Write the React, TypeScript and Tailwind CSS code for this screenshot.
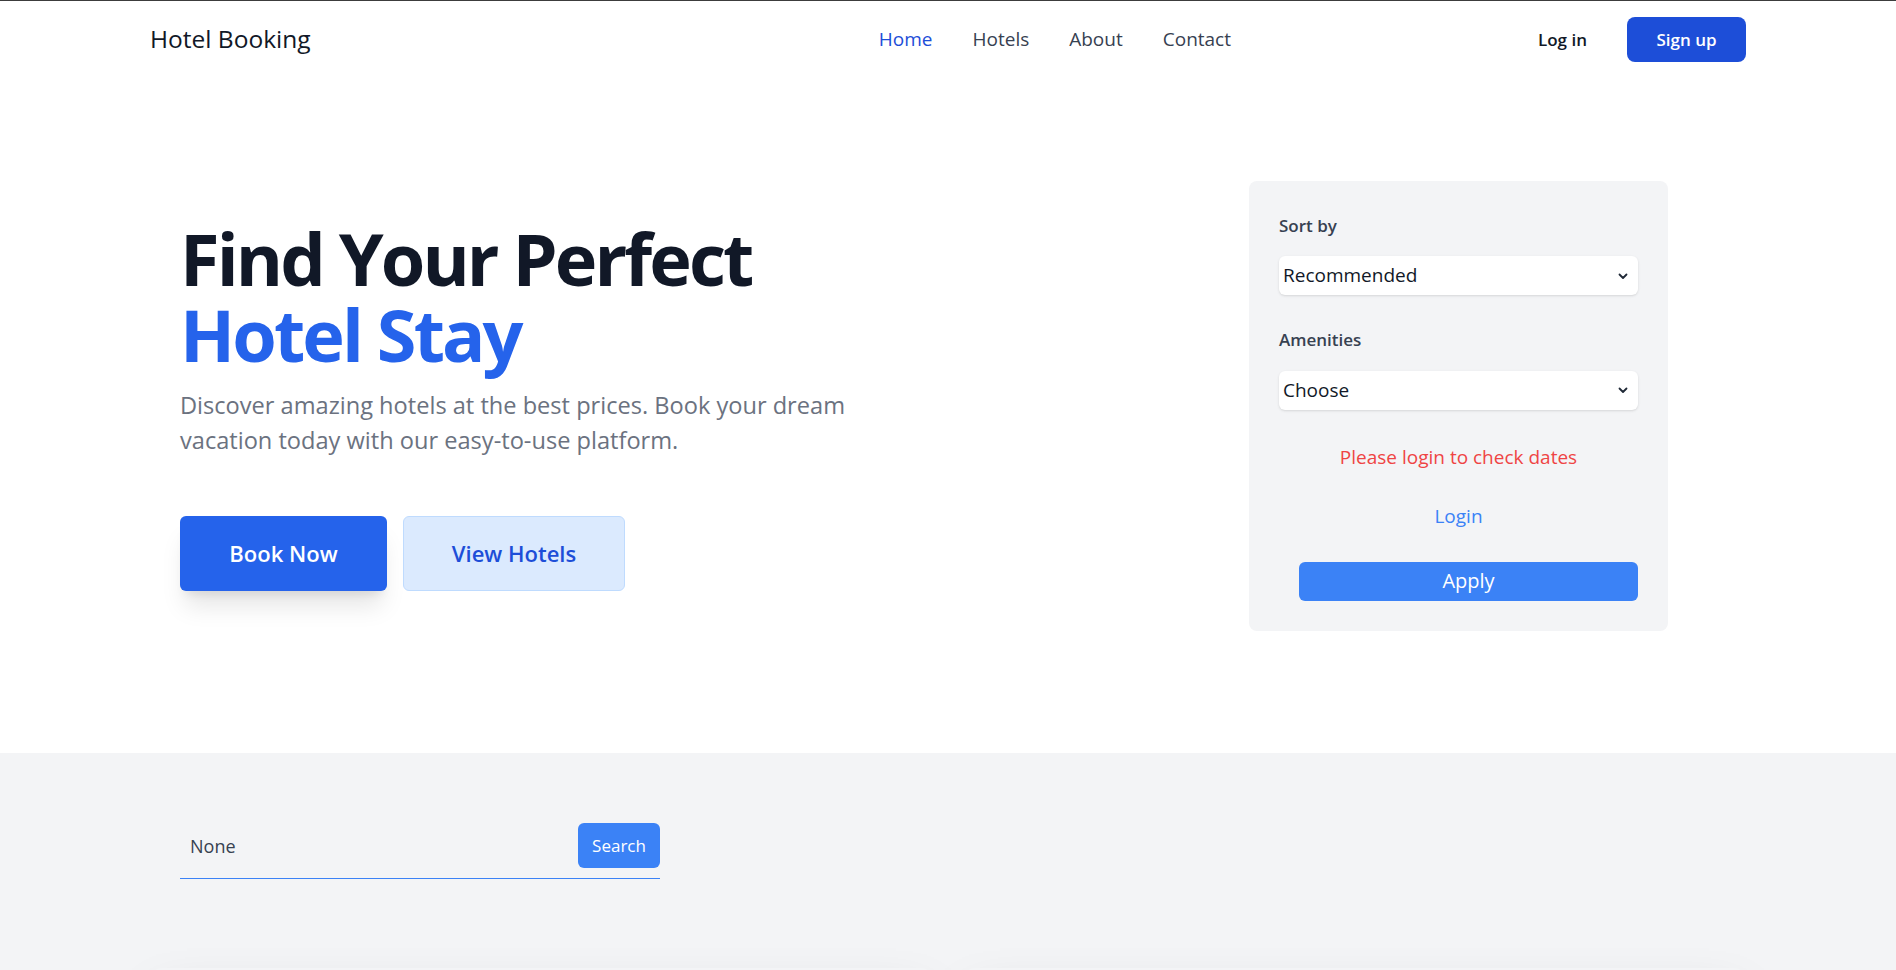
import { useState } from 'react';

function Chevron() {
  return (
    <svg className="pointer-events-none absolute right-[9px] top-1/2 h-3 w-3 -translate-y-1/2 text-[#1f2937]" viewBox="0 0 12 12" fill="none">
      <path d="M2.5 4.5 6 8l3.5-3.5" stroke="currentColor" strokeWidth="1.8" strokeLinecap="round" strokeLinejoin="round" />
    </svg>
  );
}

function Select({ value, options }: { value: string; options: string[] }) {
  return (
    <div className="relative">
      <select
        defaultValue={value}
        className="h-[39px] w-full appearance-none rounded-md bg-white px-1 text-[19px] text-[#111827] shadow-sm outline-none"
      >
        {options.map((o) => (
          <option key={o}>{o}</option>
        ))}
      </select>
      <Chevron />
    </div>
  );
}

export default function App() {
  const [query, setQuery] = useState('None');

  return (
    <div className="min-h-screen border-t border-[#3c3c3c] bg-white font-['Open_Sans',sans-serif]">
      {/* Header */}
      <header className="flex h-[77px] items-center px-[150px]">
        <a className="text-[24.5px] font-medium text-[#111827]">Hotel Booking</a>
        <nav className="ml-auto flex items-center gap-[40px] text-[19px] font-medium text-[#374151]">
          <a className="text-[#1d4ed8]">Home</a>
          <a>Hotels</a>
          <a>About</a>
          <a>Contact</a>
        </nav>
        <div className="ml-[307px] flex items-center gap-[40px]">
          <a className="text-[17px] font-semibold text-[#111827]">Log in</a>
          <button className="h-[45px] w-[119px] rounded-lg bg-[#1d4ed8] text-[17px] font-semibold text-white">
            Sign up
          </button>
        </div>
      </header>

      {/* Hero */}
      <section className="flex h-[675px] items-center justify-between pb-5 pl-[180px] pr-[228px]">
        <div>
          <h1 className="text-[72px] font-bold leading-[76px] tracking-[-0.04em]">
            <span className="block text-[#111827]">Find Your Perfect</span>
            <span className="block text-[#2563eb]">Hotel Stay</span>
          </h1>
          <p className="mt-4 max-w-[700px] text-[23.6px] leading-[35px] text-[#6b7280]">
            Discover amazing hotels at the best prices. Book your dream vacation today with our easy-to-use platform.
          </p>
          <div className="mt-[58px] flex gap-4">
            <button className="h-[75px] w-[207px] rounded-md bg-[#2563eb] text-[22px] font-semibold text-white shadow-xl">
              Book Now
            </button>
            <button className="h-[75px] w-[222px] rounded-md border border-[#bfdbfe] bg-[#dbeafe] text-[22px] font-semibold text-[#1d4ed8]">
              View Hotels
            </button>
          </div>
        </div>

        <aside className="w-[419px] rounded-lg bg-[#f3f4f6] px-[30px] pb-[30px] pt-[32px]">
          <label className="block text-[17px] font-semibold text-[#374151]">Sort by</label>
          <div className="mt-[18px]">
            <Select value="Recommended" options={['Recommended', 'Price: Low to High', 'Price: High to Low', 'Rating']} />
          </div>
          <label className="mt-[32px] block text-[17px] font-semibold text-[#374151]">Amenities</label>
          <div className="mt-[18px]">
            <Select value="Choose" options={['Choose', 'Wi-Fi', 'Pool', 'Parking', 'Breakfast']} />
          </div>
          <p className="mt-[33px] text-center text-[19px] text-[#ef4444]">Please login to check dates</p>
          <a className="mt-[31px] block text-center text-[19px] text-[#3b82f6]">Login</a>
          <div className="mt-[31px] pl-5">
            <button className="h-[39px] w-full rounded-md bg-[#3b82f6] text-xl text-white">Apply</button>
          </div>
        </aside>
      </section>

      {/* Search + listings */}
      <section className="h-[217px] overflow-hidden bg-[#f3f4f6] px-[150px] pt-[70px]">
        <div className="ml-[30px] flex w-[480px] items-center border-b border-[#3b82f6] pb-[10px]">
          <input
            value={query}
            onChange={(e) => setQuery(e.target.value)}
            className="min-w-0 flex-1 bg-transparent px-[10px] text-lg text-[#374151] outline-none"
          />
          <button className="h-[45px] w-[82px] rounded-md bg-[#3b82f6] text-[17px] text-white">Search</button>
        </div>
        <div className="mt-[89px] grid grid-cols-2 gap-[30px]">
          <div className="h-[300px] rounded-xl bg-[#f3f4f6] shadow-2xl" />
          <div className="h-[300px] rounded-xl bg-[#f3f4f6] shadow-2xl" />
        </div>
      </section>
    </div>
  );
}
